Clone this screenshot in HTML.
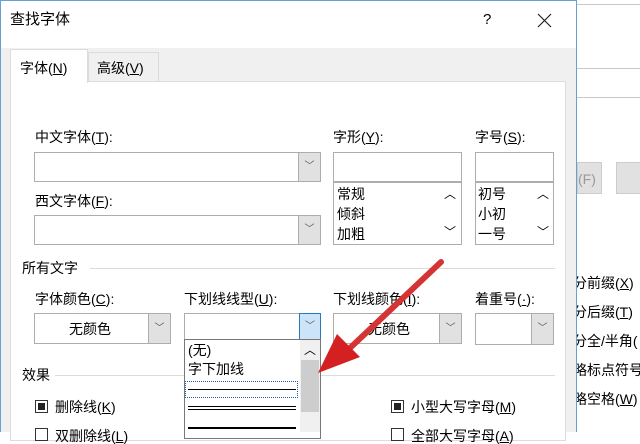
<!DOCTYPE html>
<html><head><meta charset="utf-8"><style>
*{margin:0;padding:0;box-sizing:border-box}
body{width:640px;height:432px;overflow:hidden;position:relative;background:#fff;font-family:"Liberation Sans","Noto Sans CJK SC",sans-serif;font-size:14px;color:#000}
.a{position:absolute}
.t{position:absolute;white-space:nowrap;line-height:16px}
.box{position:absolute;background:#fff;border:1px solid #adadad}
.btn{position:absolute;background:#e1e1e1;border-left:1px solid #adadad;top:0;bottom:0;right:0;width:22px;color:#555;font-size:10px;text-align:center}
u{text-decoration:underline}
.hl{position:absolute;height:1px;background:#dcdcdc}
.cb{position:absolute;width:13px;height:13px;border:1px solid #333;background:#fff}
.cb i{position:absolute;left:2px;top:2px;width:7px;height:7px;background:#222}
</style></head><body>
<div class="a" style="left:577px;top:0;width:63px;height:432px;background:#fff"></div>
<div class="hl" style="left:577px;top:4px;width:63px;background:#c8c8c8"></div>
<div class="hl" style="left:577px;top:68px;width:63px;background:#c8c8c8"></div>
<div class="hl" style="left:577px;top:97px;width:63px;background:#c8c8c8"></div>
<div class="a" style="left:577px;top:162px;width:25px;height:32px;background:#e1e1e1;border:1px solid #ccc"></div>
<div class="t" style="left:578px;top:171px;color:#999">(F)</div>
<div class="a" style="left:616px;top:162px;width:30px;height:32px;background:#e1e1e1;border:1px solid #ccc"></div>
<div class="t" style="left:573px;top:275px">分前缀(<u>X</u>)</div>
<div class="t" style="left:573px;top:304px">分后缀(<u>T</u>)</div>
<div class="t" style="left:573px;top:333px">分全/半角(</div>
<div class="t" style="left:573px;top:362px">略标点符号</div>
<div class="t" style="left:573px;top:391px">略空格(<u>W</u>)</div>
<div class="a" style="left:0;top:0;width:577px;height:432px;background:#f0f0f0;border-left:1px solid #6a9fd4;border-right:1px solid #6a9fd4;border-top:1px solid #6a9fd4"></div>
<div class="a" style="left:1px;top:1px;width:575px;height:47px;background:#fff"></div>
<div class="t" style="left:10px;top:12px;font-size:15px">查找字体</div>
<div class="t" style="left:483px;top:12px;font-size:15px">?</div>
<svg class="a" style="left:537px;top:13px" width="15" height="15"><path d="M1 1L14 14M14 1L1 14" stroke="#222" stroke-width="1.2"/></svg>
<div class="a" style="left:10px;top:81px;width:556px;height:360px;background:#fff;border:1px solid #dcdcdc"></div>
<div class="a" style="left:88px;top:52px;width:71px;height:30px;background:#f0f0f0;border:1px solid #dcdcdc"></div>
<div class="t" style="left:97px;top:60px">高级(<u>V</u>)</div>
<div class="a" style="left:10px;top:49px;width:78px;height:34px;background:#fff;border:1px solid #dcdcdc;border-bottom:none"></div>
<div class="t" style="left:20px;top:60px">字体(<u>N</u>)</div>
<div class="t" style="left:35px;top:129px">中文字体(<u>T</u>):</div>
<div class="t" style="left:333px;top:129px">字形(<u>Y</u>):</div>
<div class="t" style="left:475px;top:129px">字号(<u>S</u>):</div>
<div class="box" style="left:34px;top:152px;width:287px;height:30px"><div class="btn" style="line-height:28px">﹀</div></div>
<div class="box" style="left:333px;top:152px;width:129px;height:30px"></div>
<div class="box" style="left:475px;top:152px;width:79px;height:30px"></div>
<div class="box" style="left:333px;top:182px;width:129px;height:63px"></div>
<div class="t" style="left:337px;top:186px">常规</div><div class="t" style="left:337px;top:206px">倾斜</div><div class="t" style="left:337px;top:226px">加粗</div>
<div class="t" style="left:444px;top:186px;font-size:12px">︿</div><div class="t" style="left:444px;top:224px;font-size:12px">﹀</div>
<div class="box" style="left:475px;top:182px;width:79px;height:63px"></div>
<div class="t" style="left:478px;top:186px">初号</div><div class="t" style="left:478px;top:206px">小初</div><div class="t" style="left:478px;top:226px">一号</div>
<div class="t" style="left:537px;top:186px;font-size:12px">︿</div><div class="t" style="left:537px;top:224px;font-size:12px">﹀</div>
<div class="t" style="left:35px;top:193px">西文字体(<u>F</u>):</div>
<div class="box" style="left:34px;top:215px;width:287px;height:30px"><div class="btn" style="line-height:28px">﹀</div></div>
<div class="t" style="left:22px;top:260px">所有文字</div>
<div class="hl" style="left:90px;top:268px;width:465px"></div>
<div class="t" style="left:35px;top:291px">字体颜色(<u>C</u>):</div>
<div class="t" style="left:184px;top:291px">下划线线型(<u>U</u>):</div>
<div class="t" style="left:333px;top:291px">下划线颜色(<u>I</u>):</div>
<div class="t" style="left:475px;top:291px">着重号(<u>·</u>):</div>
<div class="box" style="left:34px;top:313px;width:137px;height:31px"><div class="t" style="left:34px;top:7px">无颜色</div><div class="btn" style="line-height:29px">﹀</div></div>
<div class="box" style="left:184px;top:313px;width:137px;height:27px"><div class="btn" style="background:#cce4f7;border:1px solid #2a7ac0;line-height:25px;top:-1px;bottom:-1px;right:-1px">﹀</div></div>
<div class="box" style="left:333px;top:313px;width:129px;height:31px"><div class="t" style="left:34px;top:7px">无颜色</div><div class="btn" style="line-height:29px">﹀</div></div>
<div class="box" style="left:475px;top:313px;width:79px;height:32px"><div class="btn" style="line-height:30px">﹀</div></div>
<div class="t" style="left:22px;top:367px">效果</div>
<div class="hl" style="left:55px;top:375px;width:500px"></div>
<div class="cb" style="left:35px;top:400px"><i></i></div>
<div class="t" style="left:55px;top:399px">删除线(<u>K</u>)</div>
<div class="cb" style="left:35px;top:428px"></div>
<div class="t" style="left:55px;top:428px">双删除线(<u>L</u>)</div>
<div class="cb" style="left:391px;top:400px"><i></i></div>
<div class="t" style="left:411px;top:399px">小型大写字母(<u>M</u>)</div>
<div class="cb" style="left:391px;top:428px"></div>
<div class="t" style="left:411px;top:428px">全部大写字母(<u>A</u>)</div>
<div class="a" style="left:184px;top:339px;width:137px;height:100px;background:#fff;border:1px solid #777"></div>
<div class="a" style="left:300px;top:340px;width:20px;height:92px;background:#f0f0f0"></div>
<div class="a" style="left:301px;top:360px;width:18px;height:52px;background:#cdcdcd"></div>
<div class="t" style="left:304px;top:342px;font-size:12px">︿</div>
<div class="t" style="left:188px;top:342px">(无)</div>
<div class="t" style="left:188px;top:361px">字下加线</div>
<div class="a" style="left:185px;top:381px;width:113px;height:17px;border:1px dotted #1a5fb4"></div>
<div class="a" style="left:188px;top:389px;width:108px;height:1px;background:#000"></div>
<div class="a" style="left:188px;top:406px;width:108px;height:1px;background:#000"></div>
<div class="a" style="left:188px;top:409px;width:108px;height:1px;background:#000"></div>
<div class="a" style="left:188px;top:427px;width:108px;height:2px;background:#000"></div>
<svg class="a" style="left:0;top:0" width="640" height="432">
<defs><linearGradient id="g" x1="0" y1="0" x2="1" y2="1"><stop offset="0" stop-color="#e85050"/><stop offset="1" stop-color="#c01818"/></linearGradient></defs>
<path d="M441 262 L350 348" stroke="url(#g)" stroke-width="6" stroke-linecap="round"/>
<path d="M318 373 L337 334 L360 357 Z" fill="#d42020"/>
</svg>
</body></html>
